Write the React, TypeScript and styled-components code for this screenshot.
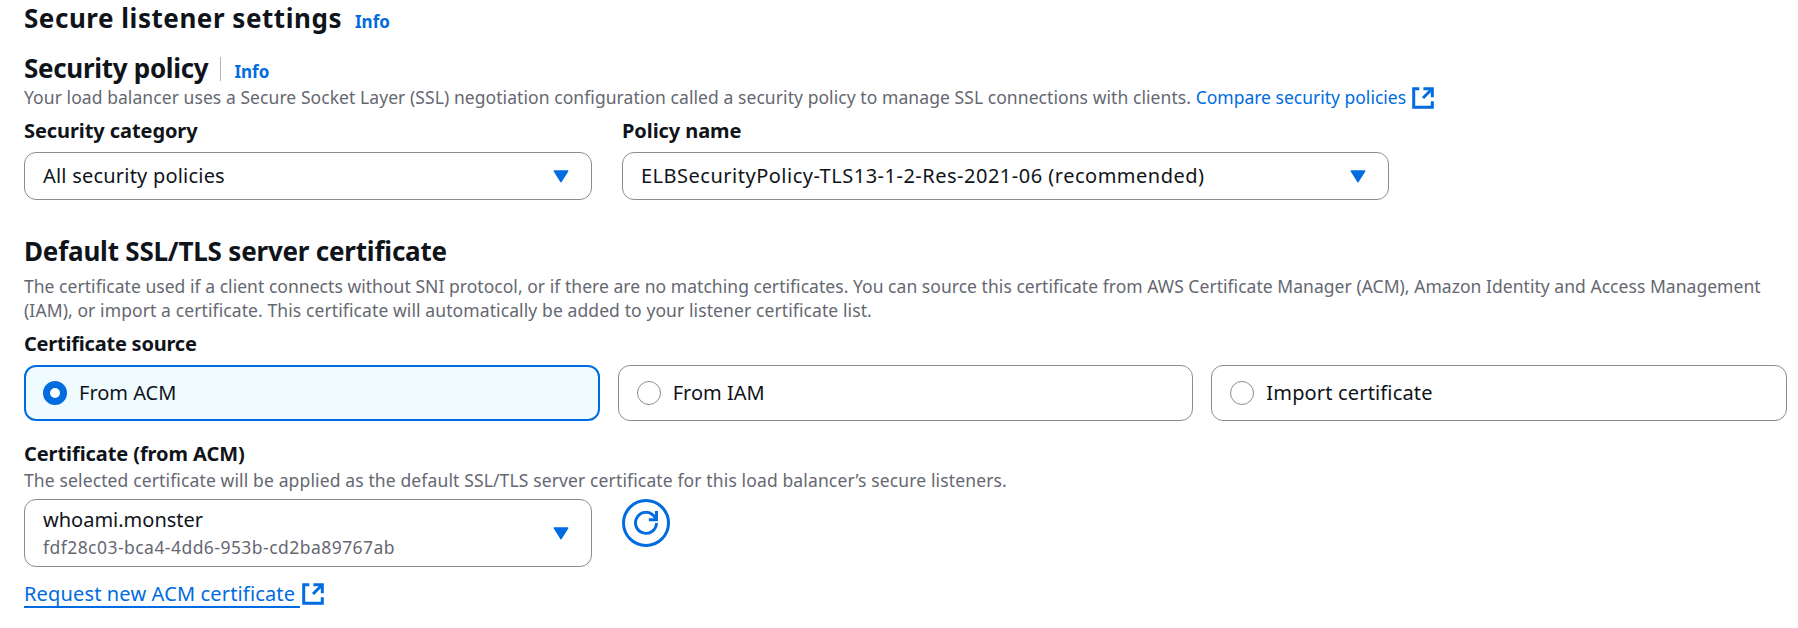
import React from 'react';
import styled, { createGlobalStyle } from 'styled-components';

const ink = '#0f141a';
const muted = '#656871';
const blue = '#006ce0';
const outline = '#8c8c94';

const GlobalStyle = createGlobalStyle`
  body {
    margin: 0;
    background: #fff;
    color: ${ink};
    font-family: 'Noto Sans', 'Open Sans', sans-serif;
  }
  *, *::before, *::after { box-sizing: border-box; }
`;

const Page = styled.main`
  display: flex;
  flex-direction: column;
  height: 628px;
  padding: 0 11px 0 24px;
  white-space: nowrap;
`;

const Section = styled.section<{ $top: number }>`
  display: flex;
  flex-direction: column;
  margin-top: ${(p) => p.$top}px;
`;

const TitleRow = styled.div`
  display: flex;
  align-items: baseline;
`;

const PageTitle = styled.h1`
  margin: 0;
  font-size: 26px;
  line-height: 36px;
  font-weight: 700;
  letter-spacing: 0.54px;
`;

const SectionTitle = styled.h2<{ $spacing: number }>`
  margin: 0;
  font-size: 26px;
  line-height: 32px;
  font-weight: 700;
  letter-spacing: ${(p) => p.$spacing}px;
`;

const InfoLink = styled.a<{ $gap: number }>`
  margin-left: ${(p) => p.$gap}px;
  color: ${blue};
  font-size: 17px;
  line-height: 24px;
  font-weight: 700;
`;

const Divider = styled.span`
  align-self: center;
  width: 1px;
  height: 24px;
  margin: 2px 0 0 12px;
  background: #b4b4bb;
`;

const Description = styled.p<{ $top?: number; $spacing?: number }>`
  margin: ${(p) => p.$top ?? 0}px 0 0;
  color: ${muted};
  font-size: 17.5px;
  line-height: 24px;
  letter-spacing: ${(p) => p.$spacing ?? 0.07}px;
`;

const WideLine = styled.span`
  display: block;
  letter-spacing: 0.04px;
`;

const InlineLink = styled.a`
  display: inline-flex;
  align-items: center;
  gap: 6px;
  height: 24px;
  vertical-align: top;
  color: ${blue};
  letter-spacing: 0;

  svg { margin-top: 2px; }
`;

const Label = styled.div<{ $top?: number; $spacing?: number }>`
  margin-top: ${(p) => p.$top ?? 0}px;
  font-size: 20px;
  line-height: 26px;
  font-weight: 700;
  letter-spacing: ${(p) => p.$spacing ?? -0.08}px;
`;

const FieldRow = styled.div`
  display: flex;
  gap: 30px;
`;

const Field = styled.div<{ $width: number }>`
  width: ${(p) => p.$width}px;
`;

const SelectBox = styled.div<{ $height: number; $top: number }>`
  display: flex;
  align-items: center;
  justify-content: space-between;
  height: ${(p) => p.$height}px;
  margin-top: ${(p) => p.$top}px;
  padding: 0 22px 0 18px;
  border: 1px solid ${outline};
  border-radius: 12px;
`;

const OptionText = styled.div`
  padding-top: 2px;
`;

const Value = styled.span<{ $spacing?: number }>`
  display: block;
  font-size: 20px;
  line-height: 26px;
  letter-spacing: ${(p) => p.$spacing ?? 0}px;
`;

const SubValue = styled.span`
  display: block;
  color: ${muted};
  font-size: 17.5px;
  line-height: 28px;
  letter-spacing: 0.46px;
`;

const Tiles = styled.div`
  display: grid;
  grid-template-columns: repeat(3, 1fr);
  gap: 18px;
  margin-top: 8px;
`;

const Tile = styled.div<{ $selected?: boolean }>`
  display: flex;
  align-items: center;
  gap: 12px;
  height: 56px;
  padding-left: ${(p) => (p.$selected ? 17 : 18)}px;
  border: ${(p) => (p.$selected ? `2px solid ${blue}` : `1px solid ${outline}`)};
  border-radius: 12px;
  background: ${(p) => (p.$selected ? '#f0fbff' : '#fff')};
`;

const Radio = styled.span<{ $selected?: boolean }>`
  width: 24px;
  height: 24px;
  border: ${(p) => (p.$selected ? `7px solid ${blue}` : `1.5px solid ${outline}`)};
  border-radius: 50%;
  background: #fff;
`;

const RefreshButton = styled.button`
  display: flex;
  align-items: center;
  justify-content: center;
  width: 48px;
  height: 48px;
  margin-top: 7px;
  padding: 0;
  border: 3px solid ${blue};
  border-radius: 50%;
  background: #fff;
`;

const RequestRow = styled.div`
  display: flex;
  align-items: flex-start;
  gap: 2px;
  margin-top: 13px;

  svg { margin-top: 3px; }
`;

const RequestLink = styled.a`
  height: 28px;
  padding-right: 5px;
  border-bottom: 2px solid ${blue};
  color: ${blue};
  font-size: 20px;
  line-height: 28px;
  letter-spacing: 0.15px;
`;

const ExternalIcon = () => (
  <svg width="22" height="22" viewBox="0 0 22 22" fill="none" stroke={blue} strokeWidth="3">
    <path d="M7.3 1.7H1.7V20.2H20.3V14.2" />
    <path d="M11.4 1.7H20.3V10.3" />
    <path d="M20 2L11 11" />
  </svg>
);

const Caret = () => (
  <svg width="16" height="13" viewBox="0 0 16 13">
    <path d="M1.4 1H14.6L8 11.6Z" fill={blue} stroke={blue} strokeWidth="1.6" strokeLinejoin="round" />
  </svg>
);

const RefreshIcon = () => (
  <svg width="24" height="24" viewBox="0 0 24 24" fill="none" stroke={blue} strokeWidth="2.9">
    <path d="M22.5 12A10.5 10.5 0 1 1 20.8 6.1L22.2 8.6" />
    <path d="M22.5 0V8.7H14.8" />
  </svg>
);

export default function App() {
  return (
    <Page>
      <GlobalStyle />
      <TitleRow>
        <PageTitle>Secure listener settings</PageTitle>
        <InfoLink $gap={13}>Info</InfoLink>
      </TitleRow>

      <Section $top={16}>
        <TitleRow>
          <SectionTitle $spacing={-0.3}>Security policy</SectionTitle>
          <Divider />
          <InfoLink $gap={13}>Info</InfoLink>
        </TitleRow>
        <Description $top={1}>
          Your load balancer uses a Secure Socket Layer (SSL) negotiation configuration called a
          security policy to manage SSL connections with clients.{' '}
          <InlineLink>
            Compare security policies
            <ExternalIcon />
          </InlineLink>
        </Description>
        <FieldRow>
          <Field $width={568}>
            <Label $top={9}>Security category</Label>
            <SelectBox $height={48} $top={8}>
              <Value $spacing={0.21}>All security policies</Value>
              <Caret />
            </SelectBox>
          </Field>
          <Field $width={767}>
            <Label $top={9}>Policy name</Label>
            <SelectBox $height={48} $top={8}>
              <Value $spacing={0.5}>ELBSecurityPolicy-TLS13-1-2-Res-2021-06 (recommended)</Value>
              <Caret />
            </SelectBox>
          </Field>
        </FieldRow>
      </Section>

      <Section $top={35}>
        <SectionTitle $spacing={-0.2}>Default SSL/TLS server certificate</SectionTitle>
        <Description $top={7} $spacing={0.1}>
          <WideLine>
            The certificate used if a client connects without SNI protocol, or if there are no
            matching certificates. You can source this certificate from AWS Certificate Manager
            (ACM), Amazon Identity and Access Management
          </WideLine>
          (IAM), or import a certificate. This certificate will automatically be added to your
          listener certificate list.
        </Description>
        <Label $top={9} $spacing={-0.22}>Certificate source</Label>
        <Tiles>
          <Tile $selected>
            <Radio $selected />
            <Value>From ACM</Value>
          </Tile>
          <Tile>
            <Radio />
            <Value>From IAM</Value>
          </Tile>
          <Tile>
            <Radio />
            <Value $spacing={0.16}>Import certificate</Value>
          </Tile>
        </Tiles>
      </Section>

      <Section $top={20}>
        <Label>Certificate (from ACM)</Label>
        <Description $top={1} $spacing={0.13}>
          The selected certificate will be applied as the default SSL/TLS server certificate for
          this load balancer’s secure listeners.
        </Description>
        <FieldRow>
          <Field $width={568}>
            <SelectBox $height={68} $top={7}>
              <OptionText>
                <Value>whoami.monster</Value>
                <SubValue>fdf28c03-bca4-4dd6-953b-cd2ba89767ab</SubValue>
              </OptionText>
              <Caret />
            </SelectBox>
          </Field>
          <RefreshButton aria-label="Refresh">
            <RefreshIcon />
          </RefreshButton>
        </FieldRow>
        <RequestRow>
          <RequestLink>Request new ACM certificate</RequestLink>
          <ExternalIcon />
        </RequestRow>
      </Section>
    </Page>
  );
}
